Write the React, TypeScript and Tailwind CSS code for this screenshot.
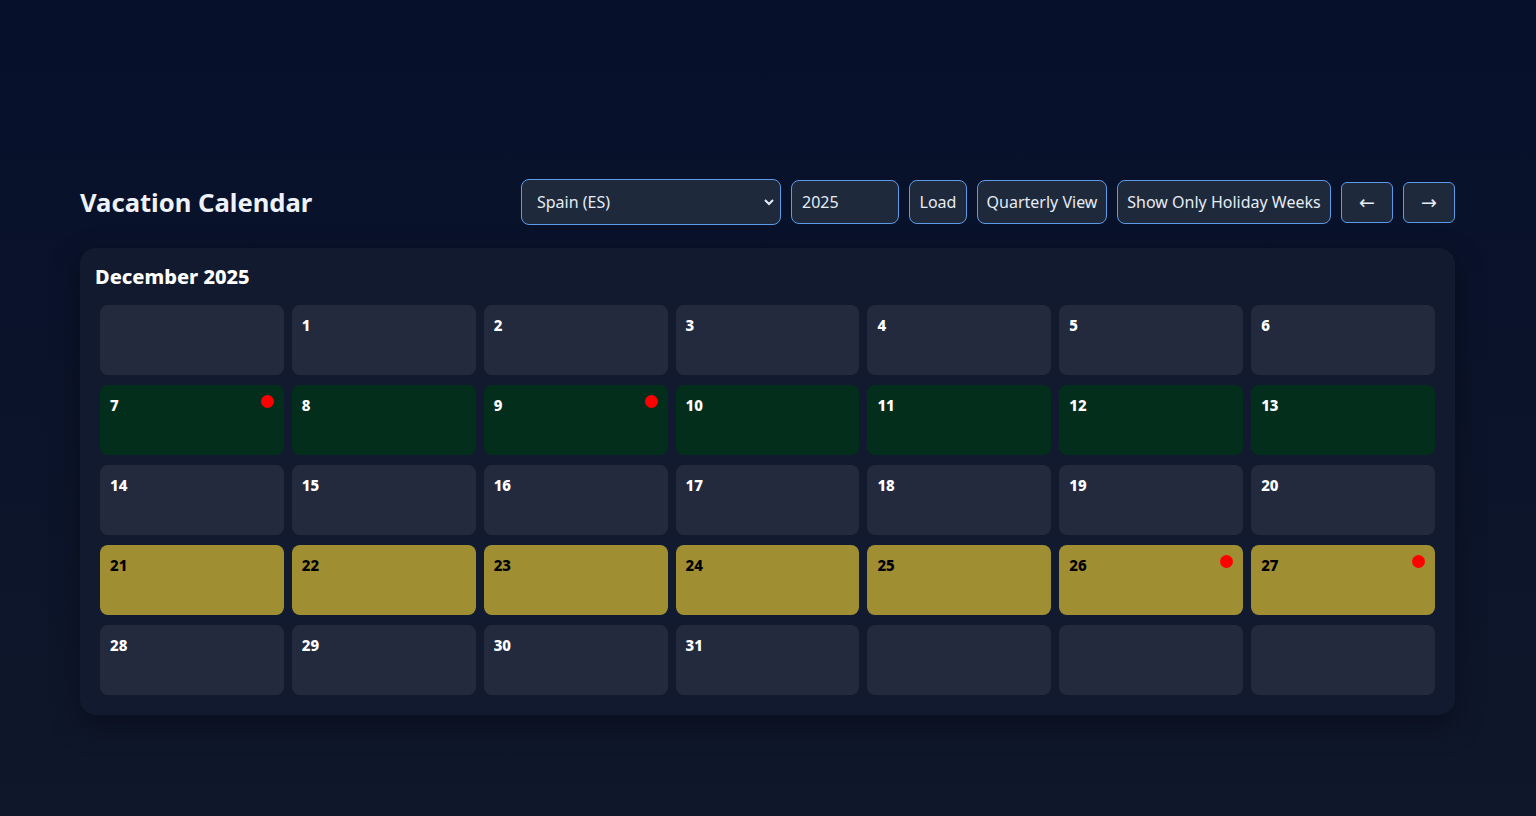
import React from "react";

type Day = { n: number | null; kind: "plain" | "green" | "yellow"; dot?: boolean };

const weeks: Day[][] = [
  [null, 1, 2, 3, 4, 5, 6].map((n) => ({ n, kind: "plain" as const })),
  [7, 8, 9, 10, 11, 12, 13].map((n) => ({ n, kind: "green" as const, dot: n === 7 || n === 9 })),
  [14, 15, 16, 17, 18, 19, 20].map((n) => ({ n, kind: "plain" as const })),
  [21, 22, 23, 24, 25, 26, 27].map((n) => ({ n, kind: "yellow" as const, dot: n === 26 || n === 27 })),
  [28, 29, 30, 31, null, null, null].map((n) => ({ n, kind: "plain" as const })),
];

const kindClass = {
  plain: "bg-[#232a3e] text-white",
  green: "bg-[#042e1c] text-white",
  yellow: "bg-[#a08e33] text-black",
};

export default function App() {
  return (
    <div className="min-h-[816px] bg-gradient-to-b from-[#07102b] to-[#0f172a] pt-[179px] font-['Noto_Sans',sans-serif]">
      <div className="ml-[80px] w-[1375px]">
        {/* header */}
        <div className="flex items-center justify-between">
          <h1 className="pt-[3px] text-[25.6px] font-bold text-[#eef2f8]">Vacation Calendar</h1>
          <div className="flex items-center gap-[10px]">
            <div className="relative">
              <select className="h-[46px] w-[260px] appearance-none rounded-lg border border-[#5b9be8] bg-[#1e293b] pl-[15px] text-[16px] text-[#e5ecf5] outline-none">
                <option>Spain (ES)</option>
              </select>
              <svg
                className="pointer-events-none absolute right-[6px] top-[17px]"
                width="12"
                height="12"
                viewBox="0 0 12 12"
                fill="none"
                stroke="#e5ecf5"
                strokeWidth="2"
              >
                <path d="M2 4l4 4 4-4" />
              </svg>
            </div>
            <input
              defaultValue="2025"
              className="h-[44px] w-[108px] rounded-lg border border-[#5b9be8] bg-[#1e293b] px-[10px] text-[16px] text-[#e5ecf5] outline-none"
            />
            <button className="h-[44px] w-[58px] rounded-lg border border-[#5b9be8] bg-[#1e293b] text-[16px] text-[#e5ecf5]">
              Load
            </button>
            <button className="h-[44px] w-[130px] rounded-lg border border-[#5b9be8] bg-[#1e293b] text-[16px] text-[#e5ecf5]">
              Quarterly View
            </button>
            <button className="h-[44px] w-[214px] rounded-lg border border-[#5b9be8] bg-[#1e293b] text-[16px] text-[#e5ecf5]">
              Show Only Holiday Weeks
            </button>
            <button className="h-[41px] w-[52px] rounded-md border border-[#5b9be8] bg-[#1e293b] font-['DejaVu_Sans',sans-serif] text-[19px] text-[#e5ecf5]">
              ←
            </button>
            <button className="h-[41px] w-[52px] rounded-md border border-[#5b9be8] bg-[#1e293b] font-['DejaVu_Sans',sans-serif] text-[19px] text-[#e5ecf5]">
              →
            </button>
          </div>
        </div>

        {/* month card */}
        <div className="mt-[23px] rounded-2xl bg-[#111a2e] p-[15px] pb-[20px] shadow-[0_10px_30px_rgba(0,0,0,0.35)]">
          <h2 className="mb-[14px] text-[20px] font-extrabold leading-[28px] text-white">December 2025</h2>
          <div className="grid grid-cols-7 gap-x-[8px] gap-y-[10px] px-[5px]">
            {weeks.flat().map((d, i) => (
              <div key={i} className={`relative h-[70px] rounded-lg px-[10px] pt-[8px] ${kindClass[d.kind]}`}>
                {d.n !== null && <span className="text-[15px] font-extrabold">{d.n}</span>}
                {d.dot && (
                  <span className="absolute right-[10px] top-[10px] h-[13px] w-[13px] rounded-full bg-[#ff0000]" />
                )}
              </div>
            ))}
          </div>
        </div>
      </div>
    </div>
  );
}
